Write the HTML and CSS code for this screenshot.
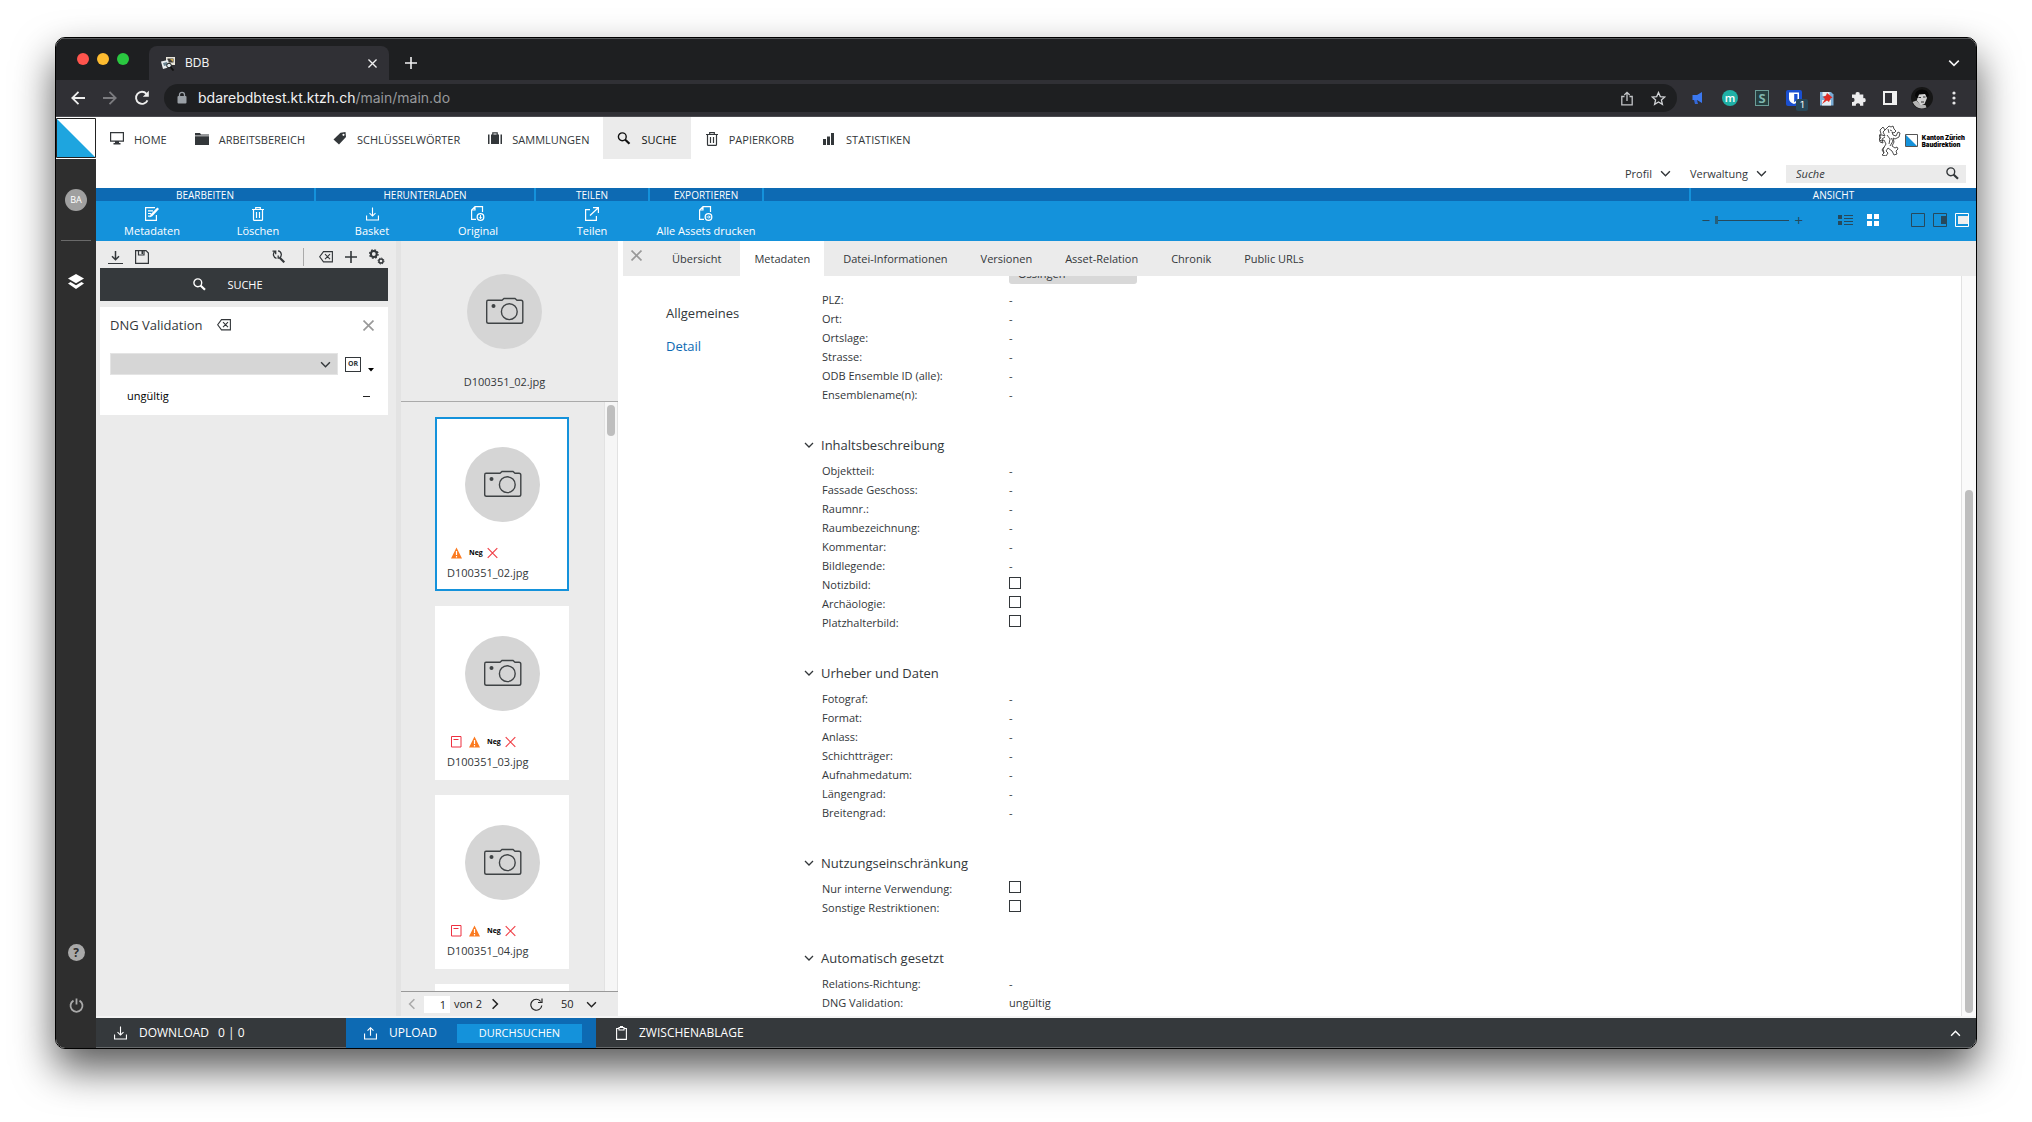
FILE: index.html
```html
<!DOCTYPE html>
<html lang="de">
<head>
<meta charset="utf-8">
<title>BDB</title>
<link rel="stylesheet" href="styles.css">
</head>
<body>
<svg class="sprite" aria-hidden="true">
  <symbol id="chevron" viewBox="0 0 10 10"><path d="M1 3l4 4 4-4" fill="none" stroke="currentColor" stroke-width="1.3"/></symbol>
  <symbol id="close" viewBox="0 0 10 10"><path d="M.5.5l9 9M9.500.5l-9 9" fill="none" stroke="currentColor" stroke-width="1.5"/></symbol>
  <symbol id="plus" viewBox="0 0 12 12"><path d="M6 0v12M0 6h12" fill="none" stroke="currentColor" stroke-width="1.600"/></symbol>
  <symbol id="search" viewBox="0 0 13 13"><circle cx="4.800" cy="4.800" r="3.900" fill="none" stroke="currentColor" stroke-width="1.400"/><path d="M7.500 7.500l4.500 4.300" stroke="currentColor" stroke-width="2.200"/></symbol>
  <symbol id="trash" viewBox="0 0 12 14"><path d="M0 2.500h12M3.700 2.300V.700h4.600v1.600M1.500 2.500v10q0 .9.9.9h7.200q.9 0 .9-.9v-10M4.500 5v6M7.500 5v6" fill="none" stroke="currentColor" stroke-width="1.200"/></symbol>
  <symbol id="clear" viewBox="0 0 14 12"><path d="M4.500.600h8.900v10.300H4.500L.7 5.700zM6 3.200l5 5M11 3.200l-5 5" fill="none" stroke="currentColor" stroke-width="1.100"/></symbol>
  <symbol id="tray-down" viewBox="0 0 14 14"><path d="M.600 8.500v4.900h12.800V8.500M7 0v9M3.800 6L7 9.200 10.200 6" fill="none" stroke="currentColor" stroke-width="1.200"/></symbol>
  <symbol id="tray-up" viewBox="0 0 14 14"><path d="M.600 7.500v5.900h12.800V7.500M7 10V1.500M3.800 4.500L7 1.300l3.200 3.200" fill="none" stroke="currentColor" stroke-width="1.200"/></symbol>
  <symbol id="camera" viewBox="0 0 75 75"><circle cx="37.500" cy="37.500" r="37.500" fill="#d5d5d5"/><path d="M21 26.300h14l2-1.800h11l2 1.800h4q1.800 0 1.800 1.800v19.400q0 1.800-1.800 1.800H21.500q-1.800 0-1.800-1.800V28q0-1.700 1.300-1.700z" fill="none" stroke="#3f4345" stroke-width="1.400"/><circle cx="42.300" cy="37.700" r="7.900" fill="none" stroke="#3f4345" stroke-width="1.400"/><circle cx="26.500" cy="32" r="2" fill="#3f4345"/></symbol>
  <symbol id="flag-note" viewBox="0 0 11 12"><path d="M.500.500h9.500v10.500H.500z" fill="none" stroke="#ee3040"/><path d="M2.500 3.500h5" stroke="#ee3040"/></symbol>
  <symbol id="flag-warn" viewBox="0 0 11 12"><path d="M5.500.5L11 11.500H0z" fill="#fb7a20"/><path d="M5.500 4v4M5.500 9v1.500" stroke="#fff" stroke-width="1.200"/></symbol>
  <symbol id="flag-cross" viewBox="0 0 11 12"><path d="M.700 1.200l9.600 9.600M10.300 1.200L.700 10.800" stroke="#f04048" stroke-width="1.200"/></symbol>
</svg>

<main class="window">
  <header class="tabstrip">
    <div class="lights"><i class="red"></i><i class="amber"></i><i class="green"></i></div>
    <div class="browser-tab">
      <svg width="15" height="15" viewBox="0 0 15 15"><path d="M5 1h9v8H5z" fill="#e9e5da"/><path d="M6.500 2.500h6v4h-6z" fill="#3c3b38"/><path d="M9 3h3v3z" fill="#c9a445"/><path d="M0 5.500l7-1.500 2 7-7 2z" fill="#e8ecef"/><path d="M2 7l4-1 1 3-4 1z" fill="#6b8390"/><circle cx="8" cy="9.500" r="2.300" fill="#dfe9ee" stroke="#161616"/><path d="M9.500 11l3 3.500" stroke="#111" stroke-width="1.800"/></svg>
      <span>BDB</span>
      <button class="tab-close" aria-label="Tab schliessen"><svg width="9" height="9"><use href="#close"/></svg></button>
    </div>
    <button class="new-tab" aria-label="Neuer Tab"><svg width="12" height="12"><use href="#plus"/></svg></button>
    <button class="tab-list" aria-label="Tabs suchen"><svg width="12" height="12"><use href="#chevron"/></svg></button>
  </header>

  <div class="browser-bar">
    <button aria-label="Zurück"><svg width="14" height="14" viewBox="0 0 14 14"><path d="M14 7H1.500M7.500.800L1.300 7l6.200 6.200" fill="none" stroke="#eee" stroke-width="1.800"/></svg></button>
    <button aria-label="Vorwärts"><svg width="14" height="14" viewBox="0 0 14 14"><path d="M0 7h12.500M6.500.800L12.700 7l-6.200 6.200" fill="none" stroke="#7b7b7f" stroke-width="1.800"/></svg></button>
    <button aria-label="Neu laden"><svg width="16" height="16" viewBox="0 0 16 16"><path d="M13.500 10.300A6 6 0 1 1 12.500 3.800" fill="none" stroke="#eee" stroke-width="1.900"/><path d="M14.800.800v6H8.800z" fill="#eee"/></svg></button>
    <div class="address">
      <svg width="10" height="14" viewBox="0 0 10 14"><rect x="0.500" y="5" width="9" height="7.500" rx="1" fill="#9aa0a6"/><path d="M2.500 5.500V3.800a2.500 2.500 0 0 1 5 0v1.700" fill="none" stroke="#9aa0a6" stroke-width="1.300"/></svg>
      <span class="url"><b>bdarebdbtest.kt.ktzh.ch</b>/main/main.do</span>
      <div class="address-tools">
        <button aria-label="Teilen"><svg width="12" height="15" viewBox="0 0 12 15"><path d="M3.500 5.500H.8v8.300h10.400V5.500H8.500M6 10V1.500M3.300 4L6 1.300 8.700 4" fill="none" stroke="#c3c5c8" stroke-width="1.300"/></svg></button>
        <button aria-label="Lesezeichen"><svg width="15" height="15" viewBox="0 0 15 15"><path d="M7.500 1.500l1.800 4.100 4.500.4-3.400 3 1 4.300-3.900-2.300-3.900 2.300 1-4.300-3.400-3 4.500-.4z" fill="none" stroke="#d0d2d5" stroke-width="1.300"/></svg></button>
      </div>
    </div>
    <div class="extensions">
      <button aria-label="Megafon"><svg width="14" height="14" viewBox="0 0 14 14"><path d="M1.500 4h4.500l5-3v11l-5-3h-4.500z" fill="#3b78f0"/><path d="M3 9h3l1 4H4z" fill="#3467d6"/></svg></button>
      <button class="ext-m" aria-label="m">m</button>
      <button class="ext-s" aria-label="S">S</button>
      <button class="ext-shield" aria-label="Passwörter"><svg width="16" height="16" viewBox="0 0 16 16"><rect width="16" height="16" rx="2" fill="#1a4fd0"/><path d="M3 2.500h10v6q0 3.500-5 5.500-5-2-5-5.500z" fill="#fff"/><path d="M8.200 4h3.300v4.500q0 2-3.300 3.800z" fill="#1a4fd0"/></svg><span>1</span></button>
      <button aria-label="Pin"><svg width="15" height="15" viewBox="0 0 15 15"><path d="M1 1h11l2.500 2.500V14.500H1z" fill="#79acd6"/><path d="M3.500 1h7v4h-7zM3 9h9v5.500H3z" fill="#e4edf3"/><path d="M8 2l5.500 4.500-2 1-1.500 3.500-2-1.500L3 13l3-5-2-2 3-1.500z" fill="#dd2b25"/></svg></button>
      <button aria-label="Erweiterungen"><svg width="15" height="15" viewBox="0 0 15 15"><path d="M1 3.500h3.700a2 2 0 1 1 3.900 0h3.700v3.700a2 2 0 1 1 0 3.900v3.600H9a2.100 2.100 0 1 0-4.100 0H1V11a2.100 2.100 0 1 0 0-4.100z" fill="#ececee"/></svg></button>
      <button aria-label="Seitenleiste"><svg width="14" height="14" viewBox="0 0 14 14"><path d="M0 0h14v14H0z" fill="#f0f0f0"/><path d="M2 2h7v10H2z" fill="#303036"/></svg></button>
      <button class="profile" aria-label="Profil"><svg width="22" height="22" viewBox="0 0 22 22"><circle cx="11" cy="11" r="11" fill="#161616"/><path d="M6.500 6q5-2.500 8 0l1.500 5-2.500 6-4 1.500-3.500-5z" fill="#d2d2d2"/><path d="M4 9q0-6 7-6.500 6 0 7 6l-2 2-2-3.500-6 .5-1.500 4z" fill="#070707"/><path d="M1.500 15l4-1.500 4 4.500 5 0 1 2.500Q6 24 1.500 15z" fill="#b5b5b5"/><path d="M7.500 10.500h2.500M12 10h2.500M10 15h3" stroke="#333"/></svg></button>
      <button aria-label="Menü"><svg width="4" height="14" viewBox="0 0 4 14" fill="#e5e5e7"><circle cx="2" cy="2" r="1.600"/><circle cx="2" cy="7" r="1.600"/><circle cx="2" cy="12" r="1.600"/></svg></button>
    </div>
  </div>

  <div class="app">
    <aside class="rail">
      <a class="home-logo" href="#" aria-label="Kanton Zürich"><svg width="40" height="40" viewBox="0 0 40 40"><path d="M0 0h40v40H0z" fill="#fff"/><path d="M1 1v38h38z" fill="#1ea5df"/><path d="M.500.500h39v39H.500z" fill="none" stroke="#222"/></svg></a>
      <button class="avatar">BA</button>
      <hr>
      <button class="layers" aria-label="Ebenen"><svg width="16" height="15" viewBox="0 0 16 15" fill="#fff"><path d="M8 0l8 4.500L8 9.200 0 4.500z"/><path d="M0 9.500l2.500-1.500L8 11.200 13.500 8 16 9.500 8 15z"/></svg></button>
      <button class="help" aria-label="Hilfe">?</button>
      <button class="power" aria-label="Abmelden"><svg width="15" height="15" viewBox="0 0 15 15"><path d="M4.500 2.600a6 6 0 1 0 6 0M7.500.500v6" fill="none" stroke="#a9a9a9" stroke-width="1.800"/></svg></button>
    </aside>

    <div class="workspace">
      <header class="masthead">
        <nav class="main-nav">
          <a href="#"><svg width="14" height="13" viewBox="0 0 14 13"><path d="M.600.600h12.800v8.500H.600z" fill="none" stroke="currentColor" stroke-width="1.200"/><path d="M5 9h4v2h1.500v1.500h-7V11H5z" fill="currentColor"/></svg>HOME</a>
          <a href="#"><svg width="14" height="12" viewBox="0 0 14 12" fill="currentColor"><path d="M0 0h5l1 1.500h8v1H0zM0 3.200h14V12H0z"/></svg>ARBEITSBEREICH</a>
          <a href="#"><svg width="14" height="13" viewBox="0 0 14 13"><path d="M7.500.800L12.500 0l.5 5-7 7.500-5.500-5z" fill="currentColor"/><circle cx="10.500" cy="2.800" r="1.100" fill="#fff"/></svg>SCHLÜSSELWÖRTER</a>
          <a href="#"><svg width="14" height="13" viewBox="0 0 14 13" fill="currentColor"><path d="M0 2.500h1.500V12H0zM12.500 2.500H14V12h-1.500zM3 2.500h8V12H3z"/><path d="M4.800 3V.8h4.400V3" fill="none" stroke="currentColor" stroke-width="1.200"/></svg>SAMMLUNGEN</a>
          <a href="#" class="active"><svg width="14" height="13"><use href="#search"/></svg>SUCHE</a>
          <a href="#"><svg width="14" height="14"><use href="#trash"/></svg>PAPIERKORB</a>
          <a href="#"><svg width="14" height="12" viewBox="0 0 14 12" fill="currentColor"><path d="M1 6h3v6H1zM5 3.500h3V12H5zM9 0h3v12H9z"/></svg>STATISTIKEN</a>
        </nav>
        <div class="brand">
          <svg width="22" height="31" viewBox="0 0 22 31" fill="none" stroke="#3a3a3a" stroke-width=".9"><path d="M8 3l2-2 2 1 2-1 1 3 2 2-2 2-2-1 1 3 3 1 2-4 2 1-1 4-4 2-2-1 1 4-2 4 3 2 2-1 1 2-2 2 1 3-3 1-2-4-4-3-2 3 2 2-2 3-4-1 2-2-1-4 3-5-2-4-3 1-2-2 2-1-2-3 3 0 3 1-2-4z"/><path d="M6 12l-3 2 1 4-3-1-1-4 2-4-1-4 3-3 2 3M8 10l3 4-1 5M13 6l-2-1M12 13l2 3-3 5M5 22l-2 3 2 3M9 4l1 4"/></svg>
          <svg width="13" height="13" viewBox="0 0 13 13"><path d="M.500.500h12v12H.500z" fill="#fff" stroke="#555"/><path d="M1 1v11h11z" fill="#1492db"/></svg>
          <p>Kanton Zürich<br>Baudirektion</p>
        </div>
        <div class="user-bar">
          <button>Profil<svg width="11" height="11"><use href="#chevron"/></svg></button>
          <button>Verwaltung<svg width="11" height="11"><use href="#chevron"/></svg></button>
          <form class="quick-search"><input type="search" placeholder="Suche" aria-label="Suche"><button type="button" aria-label="Suchen"><svg width="13" height="13"><use href="#search"/></svg></button></form>
        </div>
      </header>

      <div class="ribbon">
        <section class="wide"><h2>BEARBEITEN</h2><div>
          <button><svg width="14" height="14" viewBox="0 0 14 14"><path d="M10 .600H.600v12.800h10.800V8M3 3.800h5M3 6.500h3M3 9.200h2" fill="none" stroke="#fff" stroke-width="1.200"/><path d="M4.500 10.500l1-3L12.300.500l1.700 1.500-6.700 7.300z" fill="#fff"/></svg>Metadaten</button>
          <button><svg width="12" height="14"><use href="#trash"/></svg>Löschen</button></div></section>
        <section class="wide"><h2>HERUNTERLADEN</h2><div>
          <button><svg width="13" height="14"><use href="#tray-down"/></svg>Basket</button>
          <button><svg width="14" height="15" viewBox="0 0 14 15"><path d="M11.500 6V.600H4L.600 4v9.400H5M4 .600V4H.600" fill="none" stroke="#fff" stroke-width="1.200"/><circle cx="9.500" cy="11" r="3.300" fill="none" stroke="#fff" stroke-width="1.300"/><path d="M9.500 9v3.500M8 11.200l1.500 1.500 1.500-1.500" stroke="#fff" fill="none"/></svg>Original</button></div></section>
        <section class="narrow"><h2>TEILEN</h2><div>
          <button><svg width="14" height="14" viewBox="0 0 14 14"><path d="M5 2.600H.600v10.800h10.800V9M5 8.500l8-7.500M8 .600h5.400V6" fill="none" stroke="#fff" stroke-width="1.200"/></svg>Teilen</button></div></section>
        <section class="narrow"><h2>EXPORTIEREN</h2><div>
          <button><svg width="14" height="15" viewBox="0 0 14 15"><path d="M11.500 6V.600H4L.600 4v9.400H5M4 .600V4H.600" fill="none" stroke="#fff" stroke-width="1.200"/><circle cx="9.500" cy="11" r="3.300" fill="none" stroke="#fff" stroke-width="1.300"/><path d="M7.500 11H11M9.800 9.500l1.500 1.500-1.500 1.500" stroke="#fff" fill="none"/></svg>Alle Assets drucken</button></div></section>
        <section class="spacer"><h2></h2></section>
        <section class="view"><h2>ANSICHT</h2><div>
          <div class="zoom"><span>−</span><input type="range" min="0" max="10" value="0" aria-label="Vorschaugrösse"><span>+</span></div>
          <button aria-label="Liste"><svg width="15" height="10" viewBox="0 0 15 10" fill="#26495c"><path d="M0 0h4v4H0zM0 6h4v4H0zM6 0h9v1H6zM6 3h9v1H6zM6 6h9v1H6zM6 9h9v1H6z"/></svg></button>
          <button class="grid-view" aria-label="Raster"><svg width="12" height="12" viewBox="0 0 12 12" fill="#fff"><path d="M0 0h5v5H0zM7 0h5v5H7zM0 7h5v5H0zM7 7h5v5H7z"/></svg></button>
          <button aria-label="Ohne Details"><svg width="14" height="14" viewBox="0 0 14 14"><path d="M.500.500h13v13H.500z" fill="none" stroke="#26495c"/></svg></button>
          <button aria-label="Details seitlich"><svg width="14" height="14" viewBox="0 0 14 14"><path d="M.500.500h13v13H.500z" fill="none" stroke="#26495c"/><path d="M8 3h5v8H8z" fill="#26495c"/></svg></button>
          <button aria-label="Details gross"><svg width="14" height="14" viewBox="0 0 14 14"><path d="M.500.500h13v13H.500z" fill="none" stroke="#fff"/><path d="M3 3h10v8H3z" fill="#eee"/></svg></button>
        </div></section>
      </div>

      <div class="panels">
        <section class="filter">
          <div class="filter-tools">
            <button aria-label="Laden"><svg width="15" height="14" viewBox="0 0 15 14"><path d="M7.500 1v8.500M4 6.300l3.500 3.500L11 6.300" fill="none" stroke="currentColor" stroke-width="1.500"/><path d="M0 13.500h15" stroke="currentColor"/></svg></button>
            <button aria-label="Speichern"><svg width="14" height="14" viewBox="0 0 14 14"><path d="M.600.600h10.400l2.400 2.400v10.400H.600zM3.500.600V5h5.500V.600" fill="none" stroke="currentColor" stroke-width="1.200"/><path d="M6.500 1h1.500v3H6.500z" fill="currentColor"/></svg></button>
            <button class="reset" aria-label="Suche zurücksetzen"><svg width="13" height="13" viewBox="0 0 13 13"><path d="M8 8l4.300 4.300" stroke="currentColor" stroke-width="2.200"/><path d="M6 .800a3.800 3.800 0 0 1 1.500 7M4.500 8.300A3.800 3.800 0 0 1 3 1.500M.500 1.200h3.200v3M9 8.200H6.200V5.500" fill="none" stroke="currentColor" stroke-width="1.300"/></svg></button>
            <button class="wipe" aria-label="Leeren"><svg width="14" height="12"><use href="#clear"/></svg></button>
            <button aria-label="Hinzufügen"><svg width="12" height="12"><use href="#plus"/></svg></button>
            <button aria-label="Einstellungen"><svg width="16" height="16" viewBox="0 0 16 16" fill="none" stroke="currentColor"><circle cx="4.800" cy="5" r="2.900" stroke-width="2"/><circle cx="4.800" cy="5" r="4.200" stroke-width="1.400" stroke-dasharray="1.700 1.600"/><circle cx="12" cy="12" r="2.100" stroke-width="1.500"/><circle cx="12" cy="12" r="3" stroke-width="1" stroke-dasharray="1.200 1.150"/></svg></button>
          </div>
          <button class="run-search"><svg width="13" height="13"><use href="#search"/></svg>SUCHE</button>
          <div class="criterion">
            <header><label for="dng">DNG Validation</label><button aria-label="Leeren"><svg width="14" height="12"><use href="#clear"/></svg></button><button class="dismiss" aria-label="Entfernen"><svg width="11" height="11"><use href="#close"/></svg></button></header>
            <div class="pick"><div class="select-box"><select id="dng"><option></option><option>gültig</option></select><svg width="11" height="11"><use href="#chevron"/></svg></div><button class="operator">OR</button><svg class="caret" width="6" height="4" viewBox="0 0 6 4"><path d="M0 0h6L3 3.500z" fill="#000"/></svg></div>
            <p><span>ungültig</span><button aria-label="ungültig entfernen"></button></p>
          </div>
        </section>

        <section class="results">
          <figure class="preview"><svg width="75" height="75"><use href="#camera"/></svg><figcaption>D100351_02.jpg</figcaption></figure>
          <div class="result-scroll">
            <div class="cards">
              <article class="selected"><svg width="75" height="75"><use href="#camera"/></svg><div class="flags"><svg><use href="#flag-warn"/></svg><b>Neg</b><svg><use href="#flag-cross"/></svg></div><p>D100351_02.jpg</p></article>
              <article><svg width="75" height="75"><use href="#camera"/></svg><div class="flags"><svg><use href="#flag-note"/></svg><svg><use href="#flag-warn"/></svg><b>Neg</b><svg><use href="#flag-cross"/></svg></div><p>D100351_03.jpg</p></article>
              <article><svg width="75" height="75"><use href="#camera"/></svg><div class="flags"><svg><use href="#flag-note"/></svg><svg><use href="#flag-warn"/></svg><b>Neg</b><svg><use href="#flag-cross"/></svg></div><p>D100351_04.jpg</p></article>
              <article></article>
            </div>
            <div class="track"><i></i></div>
          </div>
          <div class="pager">
            <button class="prev" disabled aria-label="Vorherige Seite"><svg width="12" height="12"><use href="#chevron"/></svg></button>
            <input type="text" value="1" aria-label="Seite"><span>von 2</span>
            <button class="next" aria-label="Nächste Seite"><svg width="12" height="12"><use href="#chevron"/></svg></button>
            <button class="reload" aria-label="Aktualisieren"><svg width="13" height="13" viewBox="0 0 13 13"><path d="M11.800 7.500A5.500 5.500 0 1 1 10.800 3.500M12 .500v4H8" fill="none" stroke="currentColor" stroke-width="1.200"/></svg></button>
            <div class="page-size"><select aria-label="Einträge pro Seite"><option>50</option><option>100</option></select><svg width="11" height="11"><use href="#chevron"/></svg></div>
          </div>
        </section>

        <section class="detail">
          <nav class="tabs">
            <button class="close-detail" aria-label="Schliessen"><svg width="11" height="11"><use href="#close"/></svg></button>
            <a href="#">Übersicht</a><a href="#" class="active">Metadaten</a><a href="#">Datei-Informationen</a><a href="#">Versionen</a><a href="#">Asset-Relation</a><a href="#">Chronik</a><a href="#">Public URLs</a>
          </nav>
          <div class="detail-body">
            <nav class="chapters"><a href="#">Allgemeines</a><a href="#" class="active">Detail</a></nav>
            <div class="sheet">
              <dl>
                <div class="tag-row"><dt></dt><dd><span class="chip">Ossingen</span></dd></div>
                <div><dt>PLZ:</dt><dd>-</dd></div>
                <div><dt>Ort:</dt><dd>-</dd></div>
                <div><dt>Ortslage:</dt><dd>-</dd></div>
                <div><dt>Strasse:</dt><dd>-</dd></div>
                <div><dt>ODB Ensemble ID (alle):</dt><dd>-</dd></div>
                <div><dt>Ensemblename(n):</dt><dd>-</dd></div>
              </dl>
              <h3><svg width="10" height="10"><use href="#chevron"/></svg>Inhaltsbeschreibung</h3>
              <dl>
                <div><dt>Objektteil:</dt><dd>-</dd></div>
                <div><dt>Fassade Geschoss:</dt><dd>-</dd></div>
                <div><dt>Raumnr.:</dt><dd>-</dd></div>
                <div><dt>Raumbezeichnung:</dt><dd>-</dd></div>
                <div><dt>Kommentar:</dt><dd>-</dd></div>
                <div><dt>Bildlegende:</dt><dd>-</dd></div>
                <div><dt><label for="notiz">Notizbild:</label></dt><dd><input type="checkbox" id="notiz"></dd></div>
                <div><dt><label for="arch">Archäologie:</label></dt><dd><input type="checkbox" id="arch"></dd></div>
                <div><dt><label for="platz">Platzhalterbild:</label></dt><dd><input type="checkbox" id="platz"></dd></div>
              </dl>
              <h3><svg width="10" height="10"><use href="#chevron"/></svg>Urheber und Daten</h3>
              <dl>
                <div><dt>Fotograf:</dt><dd>-</dd></div>
                <div><dt>Format:</dt><dd>-</dd></div>
                <div><dt>Anlass:</dt><dd>-</dd></div>
                <div><dt>Schichtträger:</dt><dd>-</dd></div>
                <div><dt>Aufnahmedatum:</dt><dd>-</dd></div>
                <div><dt>Längengrad:</dt><dd>-</dd></div>
                <div><dt>Breitengrad:</dt><dd>-</dd></div>
              </dl>
              <h3><svg width="10" height="10"><use href="#chevron"/></svg>Nutzungseinschränkung</h3>
              <dl>
                <div><dt><label for="intern">Nur interne Verwendung:</label></dt><dd><input type="checkbox" id="intern"></dd></div>
                <div><dt><label for="restr">Sonstige Restriktionen:</label></dt><dd><input type="checkbox" id="restr"></dd></div>
              </dl>
              <h3><svg width="10" height="10"><use href="#chevron"/></svg>Automatisch gesetzt</h3>
              <dl>
                <div><dt>Relations-Richtung:</dt><dd>-</dd></div>
                <div><dt>DNG Validation:</dt><dd>ungültig</dd></div>
              </dl>
            </div>
            <div class="track long"><i></i></div>
          </div>
        </section>
      </div>

      <footer class="dock">
        <div class="download"><svg width="13" height="14"><use href="#tray-down"/></svg><span>DOWNLOAD</span><span>0 | 0</span></div>
        <div class="upload"><svg width="13" height="14"><use href="#tray-up"/></svg><span>UPLOAD</span><button>DURCHSUCHEN</button></div>
        <div class="clipboard"><svg width="11" height="14" viewBox="0 0 11 14"><path d="M3 2.500H.600v10.900h9.800V2.500H8M3 1.500h5v2.500H3z" fill="none" stroke="#fff" stroke-width="1.100"/><path d="M4 0h3v2H4z" fill="#fff"/></svg><span>ZWISCHENABLAGE</span></div>
        <button class="expand" aria-label="Aufklappen"><svg width="11" height="11"><use href="#chevron"/></svg></button>
      </footer>
    </div>
  </div>
</main>
</body>
</html>
```
FILE: styles.css
```css
* { box-sizing: border-box; }
body, h2, h3, p, dl, dd, figure { margin: 0; }
body {
  min-height: 100vh;
  padding: 37px 55px 73px;
  background: #fff;
  color: #33373a;
  font: 11px/16px "Open Sans", "Noto Sans", sans-serif;
}
button, input, select { font: inherit; color: inherit; border: 0; padding: 0; margin: 0; background: none; border-radius: 0; }
button { display: flex; align-items: center; justify-content: center; }
a { color: inherit; text-decoration: none; }
svg { display: block; flex: none; }
.sprite { display: none; }

.window {
  display: flex;
  flex-direction: column;
  height: calc(100vh - 110px);
  border: 1px solid #000;
  border-radius: 10px;
  overflow: hidden;
  background: #fff;
  box-shadow: 0 20px 40px rgba(0, 0, 0, .65);
}

/* Browser frame */
.tabstrip {
  display: flex;
  align-items: flex-end;
  height: 42px;
  flex: none;
  padding-right: 16px;
  background: #1e1f21;
  box-shadow: inset 0 1px #55585a;
  color: #f1f1f2;
  font-family: Inter, Roboto, sans-serif;
}
.lights { display: flex; gap: 8px; width: 93px; padding: 0 0 15px 21px; }
.lights i { width: 12px; height: 12px; border-radius: 50%; }
.red { background: #ff544d; }
.amber { background: #febc30; }
.green { background: #2ac840; }
.browser-tab {
  display: flex;
  align-items: center;
  gap: 9px;
  width: 240px;
  height: 34px;
  padding: 0 12px;
  border-radius: 8px 8px 0 0;
  background: #303035;
  font-size: 12px;
}
.tab-close { margin-left: auto; }
.new-tab { height: 34px; margin-left: 16px; }
.tab-list { height: 34px; margin-left: auto; }
.browser-bar {
  display: flex;
  align-items: center;
  height: 37px;
  flex: none;
  padding-left: 6px;
  border-bottom: 1px solid #4b4b50;
  background: #303035;
}
.browser-bar > button { width: 32px; }
.address {
  display: flex;
  align-items: center;
  flex: 1;
  height: 28px;
  margin-left: 6px;
  padding: 0 11px 0 13px;
  border-radius: 14px;
  background: #1e1f21;
}
.url { margin-left: 11px; color: #97999c; font: 14px/20px Inter, Roboto, sans-serif; }
.url b { color: #f2f2f3; font-weight: 400; }
.address-tools { display: flex; gap: 18px; margin-left: auto; }
.extensions { display: flex; align-items: center; padding: 0 6px 0 5px; }
.extensions button { width: 32px; }
.extensions .ext-m { width: 16px; height: 16px; margin: 0 8px; border-radius: 50%; background: #1fb0a6; color: #fff; font-weight: 600; }
.extensions .ext-s { width: 14px; height: 16px; margin: 0 9px; border: 1px solid #6b9c97; background: #263f40; color: #7fb5ae; font-weight: 700; font-size: 13px; }
.ext-shield { position: relative; }
.ext-shield span { position: absolute; left: 18px; top: 9px; width: 12px; height: 12px; border-radius: 2px; background: #284759; color: #fff; font: 9px/12px Inter, sans-serif; }

/* Left rail */
.app { display: flex; flex: 1; min-height: 0; }
.rail { display: flex; flex-direction: column; align-items: center; width: 40px; flex: none; padding-bottom: 35px; background: #2e2e2e; }
.home-logo { padding: 1px 0; background: #fff; }
.avatar { width: 22px; height: 22px; margin-top: 30px; border-radius: 50%; background: #a0a0a0; color: #fff; font-size: 9px; }
.rail hr { width: 30px; height: 1px; margin: 29px 0 0; border: 0; background: #6a6a6a; }
.layers { margin-top: 33px; }
.help { width: 17px; height: 17px; margin-top: auto; border-radius: 50%; background: #a9a9a9; color: #2e2e2e; font-weight: 700; font-size: 12px; }
.power { margin-top: 37px; }

/* Header */
.workspace { display: flex; flex-direction: column; flex: 1; min-width: 0; }
.masthead { display: grid; grid-template-columns: 1fr auto; grid-template-rows: 42px 29px; }
.main-nav { display: flex; }
.main-nav a { display: flex; align-items: center; gap: 10px; padding: 3px 14px 0; }
.main-nav svg { margin-bottom: 2px; }
.main-nav .active { background: #ebebeb; color: #111; }
.brand { display: flex; align-items: center; gap: 4px; padding: 5px 11px 0 0; color: #000; }
.brand p { font: 900 6px/7px Inter, "Open Sans", sans-serif; }
.user-bar { grid-column: 1 / -1; display: flex; align-items: center; justify-content: flex-end; padding-right: 10px; }
.user-bar > button { gap: 8px; margin-right: 19px; }
.quick-search { display: flex; align-items: center; width: 180px; height: 18px; padding: 0 7px 0 10px; background: #ebebeb; }
.quick-search input { flex: 1; min-width: 0; font-style: italic; }
.quick-search input::placeholder { color: #33373a; opacity: 1; }

/* Ribbon */
.ribbon { display: flex; gap: 2px; height: 53px; flex: none; background: #1492db; color: #fff; }
.ribbon h2 { height: 13px; background: #0d6ab3; font: 10px/14px "Open Sans", sans-serif; text-align: center; }
.ribbon section > div { display: flex; height: 40px; padding: 0 3px; }
.ribbon section > div > button { flex: 1; flex-direction: column; gap: 2px; justify-content: flex-end; padding-bottom: 2px; white-space: nowrap; }
.wide { width: 218px; }
.narrow { width: 112px; }
.spacer { flex: 1; }
.view { width: 285px; color: #26495c; }
.view h2 { color: #fff; }
.ribbon .view > div { align-items: center; justify-content: flex-end; gap: 8px; padding: 0 7px 2px 0; }
.ribbon .view > div > button { flex: none; padding: 0; }
.ribbon .view .grid-view { margin: 0 24px 0 6px; }
.zoom { display: flex; align-items: center; gap: 5px; margin-right: 27px; font-size: 15px; }
.zoom input { appearance: none; width: 74px; height: 8px; background: linear-gradient(#26495c, #26495c) 0 50% / 100% 1px no-repeat; }
.zoom input::-webkit-slider-thumb { appearance: none; width: 3px; height: 8px; background: #26607c; }

/* Search panel */
.panels { display: flex; flex: 1; min-height: 0; border-bottom: 2px solid #f4f4f4; }
.filter { width: 305px; flex: none; padding: 0 8px 0 4px; background: #ebebeb; border-right: 5px solid #e3e3e3; }
.filter-tools { display: flex; align-items: center; height: 27px; padding: 4px 3px 0 8px; gap: 12px; }
.filter-tools .reset { margin-left: auto; margin-right: 6px; }
.filter-tools .wipe { height: 18px; padding-left: 15px; border-left: 1px solid #aaa; }
.run-search { width: 288px; height: 33px; gap: 21px; padding-right: 32px; background: #35393c; color: #fff; }
.criterion { width: 288px; height: 108px; margin-top: 6px; padding: 9px 10px 0; background: #fff; }
.criterion header { display: flex; align-items: center; height: 18px; gap: 15px; padding-right: 4px; font-size: 13px; }
.criterion .dismiss { margin-left: auto; color: #999; }
.pick { display: flex; align-items: center; gap: 7px; margin-top: 19px; }
.select-box { position: relative; width: 228px; }
.select-box select { display: block; appearance: none; width: 100%; height: 22px; border: 1px solid #e4e4e4; background: #d6d6d6; }
.select-box svg { position: absolute; right: 7px; top: 6px; pointer-events: none; }
.operator { width: 16px; height: 15px; border: 1px solid #33373a; font-size: 7px; font-weight: 700; }
.caret { align-self: flex-end; margin-bottom: 3px; }
.criterion p { display: flex; align-items: center; justify-content: space-between; padding: 13px 8px 0 17px; color: #000; }
.criterion p button { width: 7px; height: 1px; background: #222; }

/* Result list */
.results { display: flex; flex-direction: column; width: 217px; flex: none; background: #ebebeb; }
.preview { display: flex; flex-direction: column; align-items: center; gap: 25px; height: 161px; padding: 33px 10px 0 0; border-bottom: 1px solid #aaa; flex: none; }
.result-scroll { display: flex; flex: 1; min-height: 0; overflow: hidden; }
.cards { display: flex; flex-direction: column; gap: 15px; flex: 1; padding: 15px 34px 0; }
.cards article { width: 134px; height: 174px; flex: none; padding: 28px 10px 0; border: 2px solid #fff; background: #fff; }
.cards .selected { border-color: #1492db; }
.cards article > svg { margin: 0 auto; }
.flags { display: flex; align-items: center; height: 12px; margin: 25px 0 6px 4px; }
.flags > * { width: 18px; }
.flags svg { width: 11px; height: 12px; margin-right: 7px; }
.flags b { color: #000; font-size: 7px; line-height: 12px; font-weight: 700; }
.track { width: 14px; flex: none; padding: 3px 2px; background: #f6f6f6; border: solid #e2e2e2; border-width: 0 1px; }
.track i { display: block; width: 8px; height: 31px; border-radius: 4px; background: #bebebe; }
.pager { display: flex; align-items: center; height: 25px; flex: none; padding: 0 21px 0 5px; border-top: 1px solid #999; color: #222; }
.prev { color: #aaa; margin-right: 6px; }
.prev svg { transform: rotate(90deg); }
.next svg { transform: rotate(-90deg); }
.pager input { width: 26px; height: 17px; margin-right: 4px; padding-right: 4px; background: #fff; text-align: right; }
.next { margin-left: 7px; }
.reload { margin-left: auto; margin-right: 18px; }
.page-size { display: flex; align-items: center; }
.page-size select { appearance: none; width: 25px; }

/* Detail panel */
.detail { display: flex; flex-direction: column; flex: 1; min-width: 0; margin-left: 5px; }
.tabs { display: flex; gap: 5px; height: 35px; flex: none; background: #ebebeb; }
.tabs a { display: flex; align-items: center; padding: 0 14px; }
.tabs .active { background: #fff; }
.close-detail { width: 30px; padding: 0 8px 7px 5px; color: #999; }
.detail-body { display: flex; flex: 1; min-height: 0; overflow: hidden; }
.chapters { display: flex; flex-direction: column; gap: 15px; width: 139px; flex: none; padding: 28px 0 0 43px; font-size: 13px; line-height: 18px; }
.chapters .active { color: #0d6ab3; }
.sheet { display: flex; flex-direction: column; justify-content: flex-end; flex: 1; padding: 0 0 4px 42px; }
.sheet h3 { display: flex; align-items: center; gap: 7px; margin: 31px 0 6px; font: 13px/20px "Open Sans", sans-serif; }
.sheet dl > div { display: flex; height: 19px; line-height: 19px; padding-left: 18px; }
.sheet dt { width: 187px; }
.sheet .tag-row { height: 26px; }
.chip { display: block; width: 128px; height: 20px; padding-left: 9px; border-radius: 3px; background: #d8d8d8; }
.sheet input { appearance: none; display: block; width: 12px; height: 12px; margin-top: 2px; border: 1px solid #33373a; background: #fff; }
.track.long { display: flex; align-items: flex-end; width: 15px; padding: 0 3px 3px; background: #fafafa; border-right: 0; }
.track.long i { height: 71%; }

/* Footer */
.dock { display: flex; height: 30px; flex: none; background: #35393c; color: #fff; font-size: 12px; box-shadow: inset 0 -1px #66696b; }
.dock > div { display: flex; align-items: center; }
.download { width: 250px; padding-left: 18px; }
.download span { margin-left: 9px; }
.dock svg + span { margin-left: 12px; }
.upload { width: 250px; padding: 0 14px 0 18px; background: #0d6ab3; }
.upload button { width: 125px; height: 19px; margin-left: auto; background: #1492db; font-size: 11px; }
.clipboard { padding-left: 20px; }
.expand { margin: 0 15px 0 auto; }
.expand svg { transform: rotate(180deg); }
```
